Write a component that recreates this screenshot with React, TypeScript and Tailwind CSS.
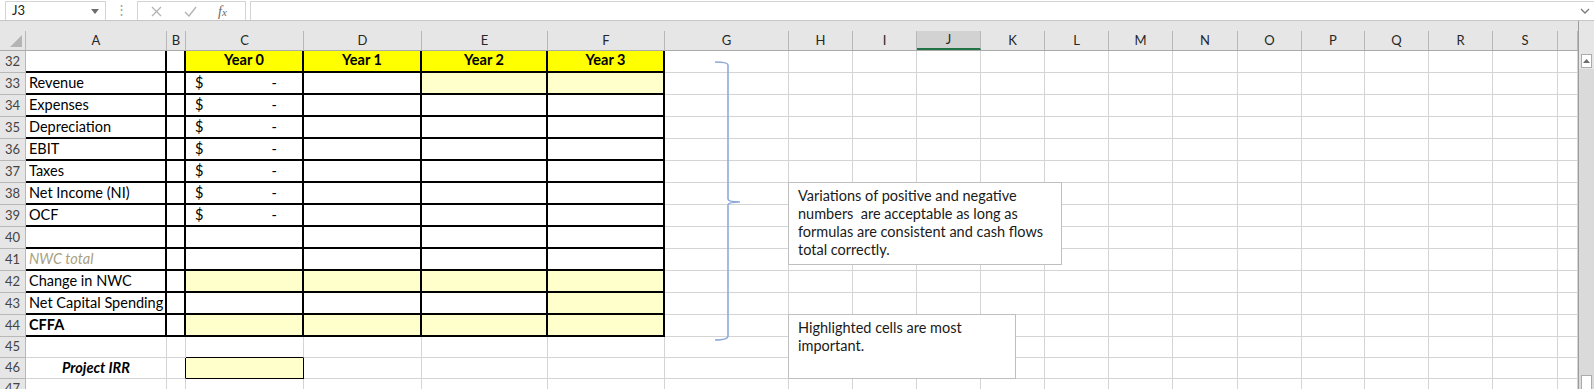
import React from 'react';

type Col = { id: string; w: string };

const COLS: Col[] = [
  { id: 'A', w: 'w-[141px]' },
  { id: 'B', w: 'w-[19px]' },
  { id: 'C', w: 'w-[118px]' },
  { id: 'D', w: 'w-[118px]' },
  { id: 'E', w: 'w-[126px]' },
  { id: 'F', w: 'w-[117px]' },
  { id: 'G', w: 'w-[124px]' },
  { id: 'H', w: 'w-[64px]' },
  { id: 'I', w: 'w-[64px]' },
  { id: 'J', w: 'w-[64px]' },
  { id: 'K', w: 'w-[64px]' },
  { id: 'L', w: 'w-[64px]' },
  { id: 'M', w: 'w-[64px]' },
  { id: 'N', w: 'w-[65px]' },
  { id: 'O', w: 'w-[64px]' },
  { id: 'P', w: 'w-[63px]' },
  { id: 'Q', w: 'w-[64px]' },
  { id: 'R', w: 'w-[64px]' },
  { id: 'S', w: 'w-[65px]' },
  { id: '', w: 'w-[20px]' },
];

const ROWS = [
  { n: 32, h: 'h-[22px]' },
  { n: 33, h: 'h-[22px]' },
  { n: 34, h: 'h-[22px]' },
  { n: 35, h: 'h-[22px]' },
  { n: 36, h: 'h-[22px]' },
  { n: 37, h: 'h-[22px]' },
  { n: 38, h: 'h-[22px]' },
  { n: 39, h: 'h-[22px]' },
  { n: 40, h: 'h-[22px]' },
  { n: 41, h: 'h-[22px]' },
  { n: 42, h: 'h-[22px]' },
  { n: 43, h: 'h-[22px]' },
  { n: 44, h: 'h-[22px]' },
  { n: 45, h: 'h-[21px]' },
  { n: 46, h: 'h-[21px]' },
  { n: 47, h: 'h-[21px]' },
];

const LABELS: Record<number, string> = {
  33: 'Revenue',
  34: 'Expenses',
  35: 'Depreciation',
  36: 'EBIT',
  37: 'Taxes',
  38: 'Net Income (NI)',
  39: 'OCF',
  41: 'NWC total',
  42: 'Change in NWC',
  43: 'Net Capital Spending',
  44: 'CFFA',
};

// cells that carry the pale "fill me in" yellow
const HIGHLIGHT = ['E33', 'F33', 'C42', 'D42', 'E42', 'F42', 'F43', 'C44', 'D44', 'E44', 'F44', 'C46'];
const TABLE_COLS = ['A', 'B', 'C', 'D', 'E', 'F'];

function cellClass(col: string, row: number) {
  const inTable = TABLE_COLS.includes(col) && row >= 32 && row <= 44;
  const parts = ['shrink-0 h-full flex items-end overflow-visible whitespace-nowrap'];

  if (inTable) {
    parts.push('border-r-2 border-b-2 border-black');
  } else if ((col === 'B' || col === 'C') && row === 46) {
    parts.push('border-r border-r-black border-b border-b-[#d4d4d4]');
    if (col === 'C') parts.push('border-b-black');
  } else if (col === 'C' && row === 45) {
    parts.push('border-r border-r-[#d4d4d4] border-b border-b-black');
  } else {
    parts.push('border-r border-b border-[#d4d4d4]');
  }

  if (row === 32 && ['C', 'D', 'E', 'F'].includes(col)) parts.push('bg-[#ffff00]');
  else if (HIGHLIGHT.includes(col + row)) parts.push('bg-[#ffffcc]');
  else parts.push('bg-white');

  return parts.join(' ');
}

function CellContent({ col, row }: { col: string; row: number }) {
  if (row === 32 && ['C', 'D', 'E', 'F'].includes(col)) {
    const year = ['C', 'D', 'E', 'F'].indexOf(col);
    return <span className="w-full text-center font-bold leading-[20px] pb-[1px]">Year {year}</span>;
  }
  if (col === 'A' && LABELS[row]) {
    if (row === 41) return <span className="pl-[3px] italic text-[#a99f80] leading-[20px]">{LABELS[row]}</span>;
    if (row === 44) return <span className="pl-[3px] font-bold leading-[20px]">{LABELS[row]}</span>;
    return <span className="pl-[3px] leading-[20px]">{LABELS[row]}</span>;
  }
  if (col === 'A' && row === 46) {
    return <span className="w-full text-center font-bold italic leading-[20px]">Project IRR</span>;
  }
  if (col === 'C' && row >= 33 && row <= 39) {
    return (
      <span className="w-full flex justify-between pl-[9px] pr-[25px] leading-[20px]">
        <span>$</span>
        <span>-</span>
      </span>
    );
  }
  return null;
}

function FormulaBar() {
  return (
    <div className="h-[21px] flex items-stretch bg-white border-b border-[#c6c6c6] text-[13px]">
      <div className="ml-[5px] mt-[1px] w-[101px] h-[19px] border border-[#d4d4d4] border-b-0 flex items-center justify-between pl-[6px] pr-[6px] text-[#222]">
        <span>J3</span>
        <svg width="8" height="5" viewBox="0 0 8 5"><path d="M0 0h8L4 5z" fill="#6d6d6d" /></svg>
      </div>
      <div className="w-[31px] flex items-center justify-center text-[#a0a0a0]">⋮</div>
      <div className="mt-[1px] w-[109px] h-[19px] border border-[#d4d4d4] border-b-0 flex items-center">
        <svg className="ml-[13px]" width="11" height="11" viewBox="0 0 11 11">
          <path d="M1 1l9 9M10 1l-9 9" stroke="#b3b3b3" strokeWidth="1.3" />
        </svg>
        <svg className="ml-[22px]" width="13" height="11" viewBox="0 0 13 11">
          <path d="M1 6l4 4 7-9" stroke="#b3b3b3" strokeWidth="1.4" fill="none" />
        </svg>
        <span className="ml-[21px] italic font-['Liberation_Serif',serif] text-[14px] text-[#6a6a6a]">
          f<span className="text-[11px]">x</span>
        </span>
      </div>
      <div className="ml-[4px] mt-[1px] flex-1 h-[19px] border-l border-t border-[#d4d4d4] flex items-center justify-end pr-[4px]">
        <svg width="10" height="6" viewBox="0 0 10 6"><path d="M1 1l4 4 4-4" stroke="#7a7a7a" strokeWidth="1.3" fill="none" /></svg>
      </div>
    </div>
  );
}

function ColumnHeaders() {
  return (
    <div className="h-[30px] flex items-end bg-[#e6e6e6] border-b border-[#ababab]">
      <div className="w-[26px] h-[19px] shrink-0 border-r border-[#b8b8b8] flex items-end justify-end pr-[3px] pb-[3px]">
        <svg width="12" height="12" viewBox="0 0 12 12"><path d="M12 0v12H0z" fill="#b4b4b4" /></svg>
      </div>
      {COLS.map((c, i) =>
        c.id === 'J' ? (
          <div key={i} className={`${c.w} shrink-0 h-[19px] border-r border-[#b8b8b8] bg-[#d2d2d2] border-b-2 border-b-[#217346] flex items-center justify-center text-[13px] text-[#262626]`}>
            {c.id}
          </div>
        ) : (
          <div key={i} className={`${c.w} shrink-0 h-[19px] border-r border-[#b8b8b8] flex items-center justify-center text-[13px] text-[#262626]`}>
            {c.id}
          </div>
        )
      )}
    </div>
  );
}

export default function App() {
  return (
    <div className="relative w-[1594px] h-[389px] overflow-hidden bg-white font-[Lato,sans-serif] text-black">
      <FormulaBar />
      <div className="flex">
        <div className="w-[1579px] shrink-0 border-r border-[#9c9c9c]">
          <ColumnHeaders />
          {ROWS.map((r) => (
            <div key={r.n} className={`${r.h} flex text-[14.5px]`}>
              <div className="w-[26px] shrink-0 h-full bg-[#e6e6e6] border-r border-b border-[#b8b8b8] flex items-center justify-center text-[13px] text-[#444]">
                {r.n}
              </div>
              {COLS.map((c, i) => (
                <div key={i} className={`${c.w} ${cellClass(c.id, r.n)}`}>
                  <CellContent col={c.id} row={r.n} />
                </div>
              ))}
            </div>
          ))}
        </div>
        <div className="flex-1 bg-[#e6e6e6] flex flex-col">
          <div className="mt-[33px] mx-[2px] h-[14px] bg-white border border-[#ababab] flex items-center justify-center">
            <svg width="7" height="4" viewBox="0 0 7 4"><path d="M0 4h7L3.5 0z" fill="#6d6d6d" /></svg>
          </div>
          <div className="flex-1 bg-[#dadada] mt-[1px] flex flex-col justify-end">
            <div className="mx-[2px] h-[25px] bg-white border border-[#ababab]" />
          </div>
        </div>
      </div>

      {/* curly brace shape */}
      <svg className="absolute left-[710px] top-[55px]" width="40" height="295" viewBox="0 0 40 295">
        <path
          d="M5 7 Q18 7 18 10 L18 144 Q18 147 30 147 Q18 147 18 150 L18 281 Q18 285 5 285"
          stroke="#8eaadb"
          strokeWidth="1.6"
          fill="none"
        />
      </svg>

      <div className="absolute left-[788px] top-[182px] w-[274px] h-[83px] bg-white border border-[#bfbfbf] pl-[9px] pt-[4px] text-[14.5px] leading-[18px] text-[#1a1a1a]">
        Variations of positive and negative
        <br />
        numbers&nbsp; are acceptable as long as
        <br />
        formulas are consistent and cash flows
        <br />
        total correctly.
      </div>
      <div className="absolute left-[788px] top-[314px] w-[228px] h-[65px] bg-white border border-[#bfbfbf] pl-[9px] pt-[4px] text-[14.5px] leading-[18px] text-[#1a1a1a]">
        Highlighted cells are most
        <br />
        important.
      </div>
    </div>
  );
}
